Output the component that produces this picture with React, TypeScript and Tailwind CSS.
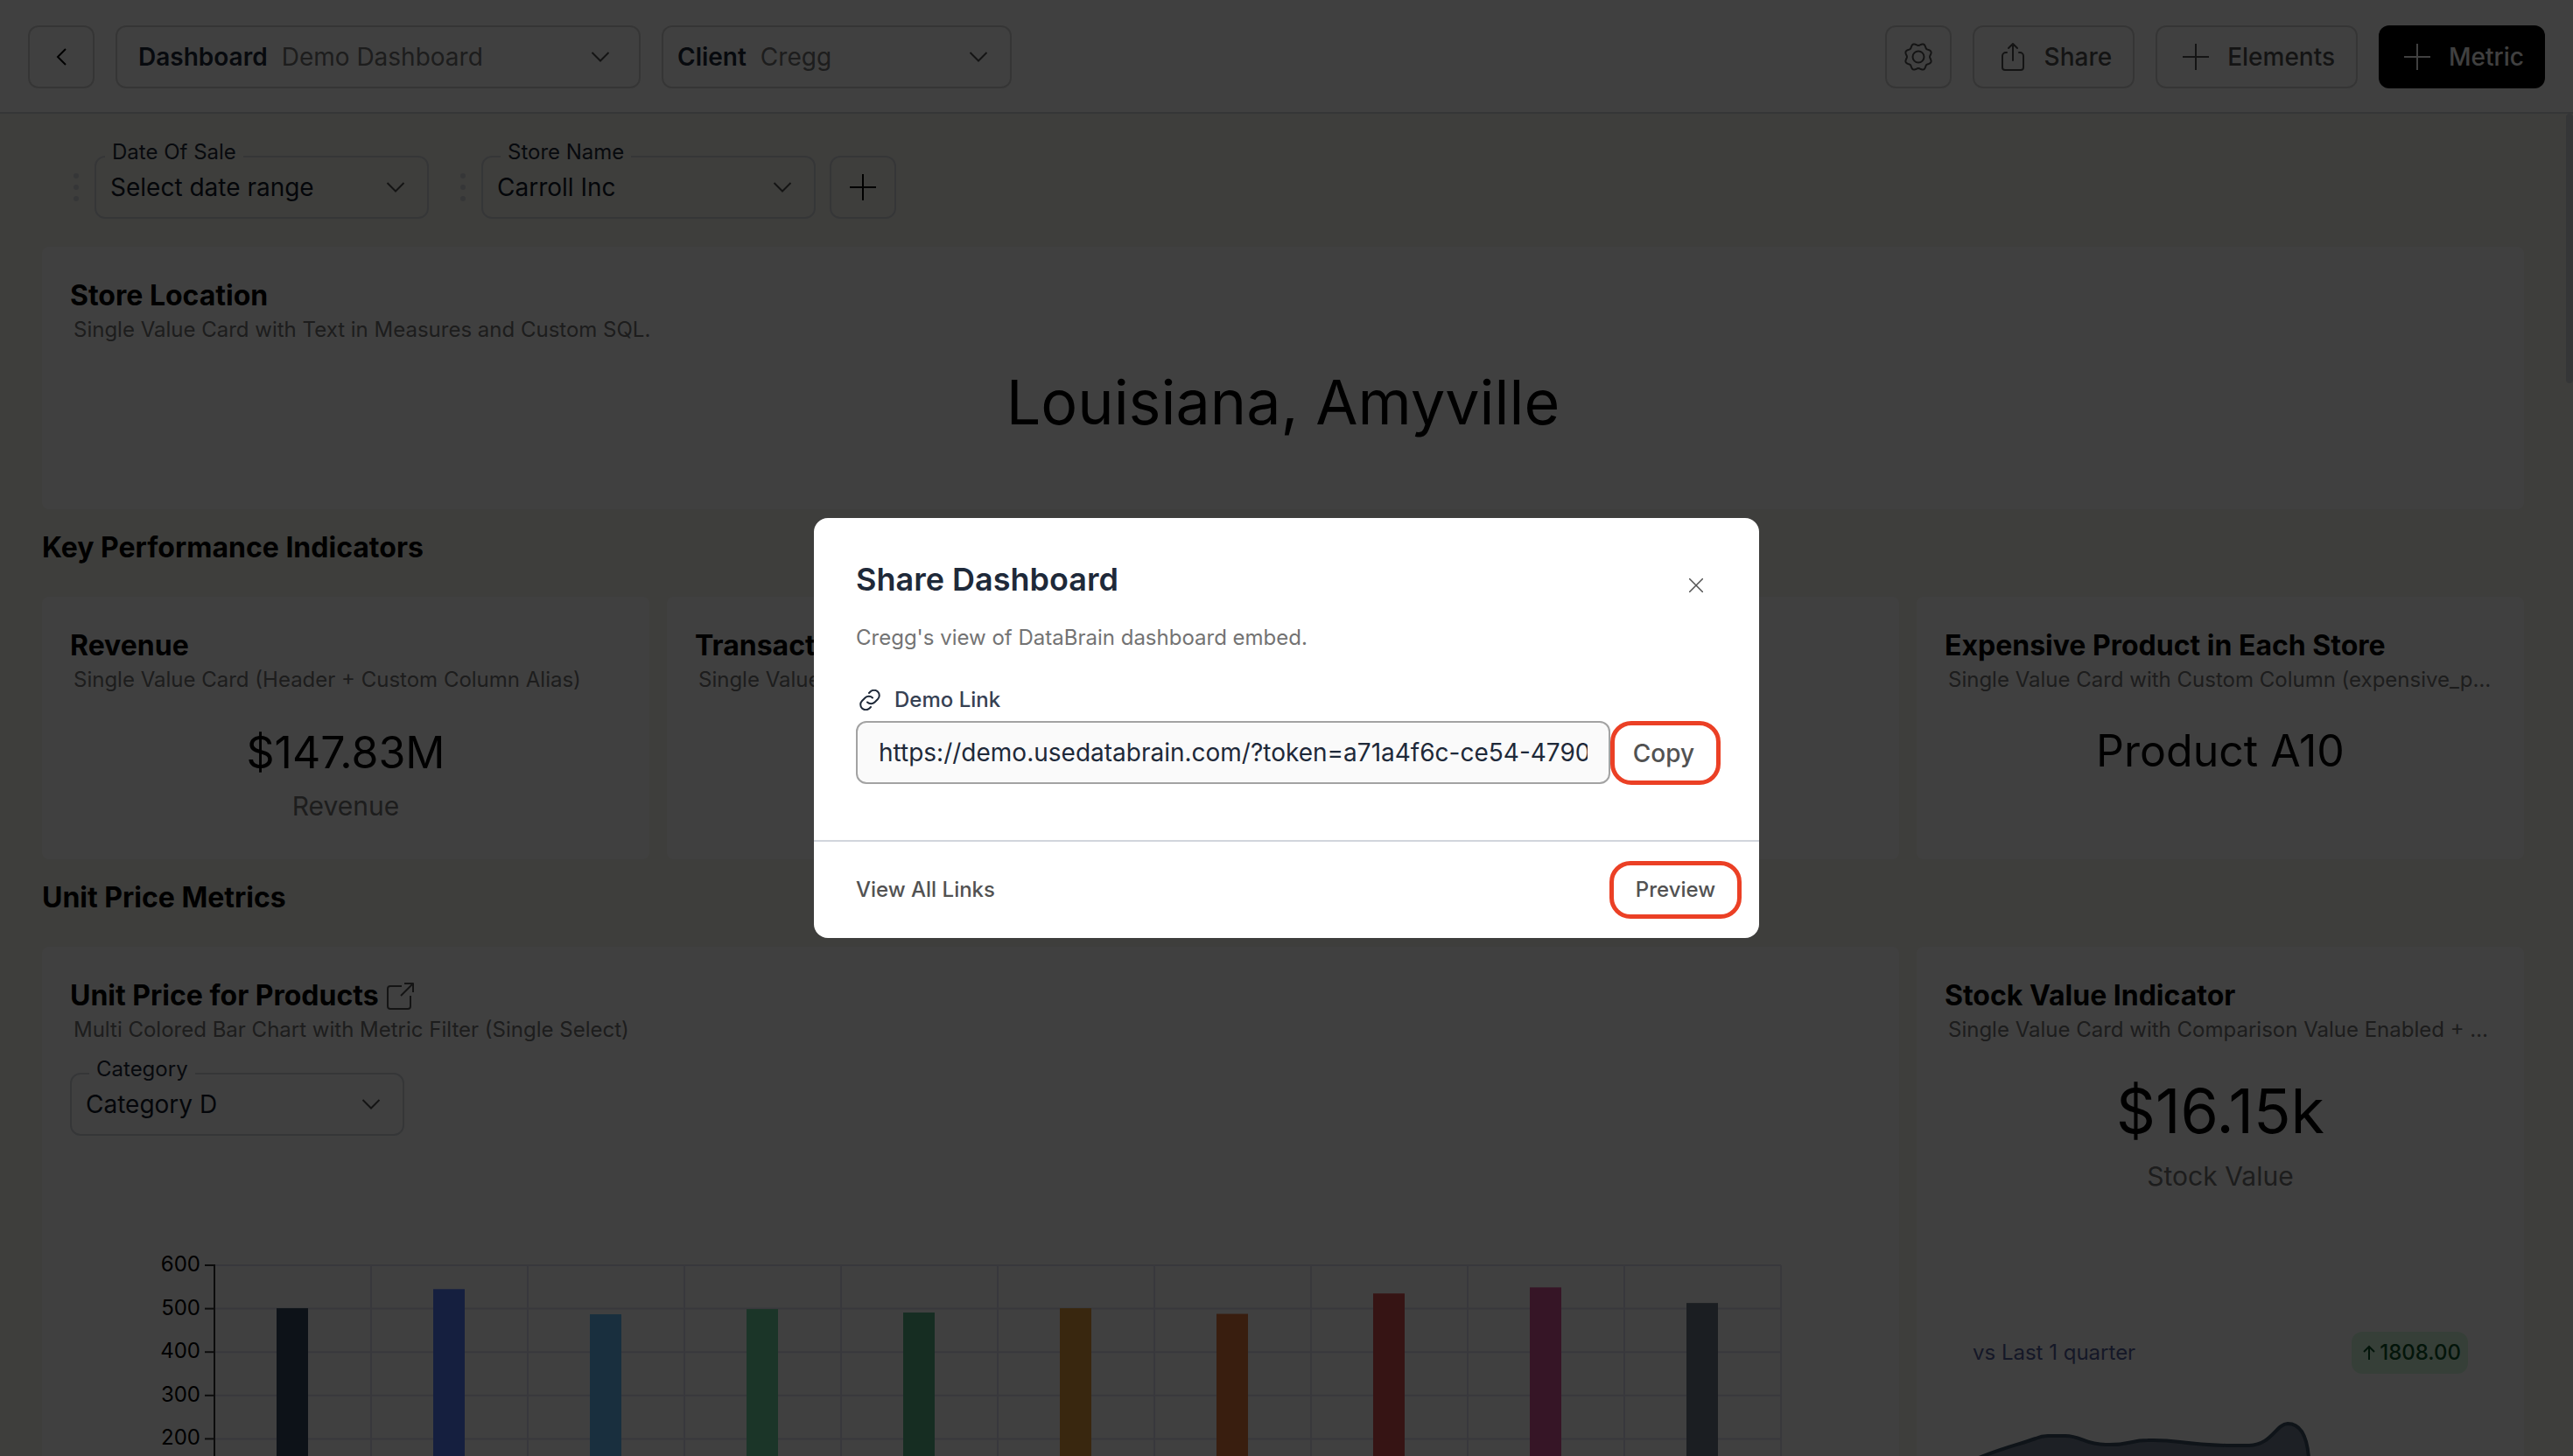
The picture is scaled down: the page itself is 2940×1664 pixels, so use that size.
import { ReactNode } from 'react';

const CHART_BARS = [
  { value: 501, color: '#344860' },
  { value: 545, color: '#547cfc' },
  { value: 487, color: '#64bcf8' },
  { value: 499, color: '#6cd4a0' },
  { value: 491, color: '#58b488' },
  { value: 501, color: '#e49c3c' },
  { value: 488, color: '#e4783c' },
  { value: 535, color: '#d85050' },
  { value: 549, color: '#d85498' },
  { value: 513, color: '#6c7888' },
];

const TICKS = [600, 500, 400, 300, 200];

const tickY = (value: number) => 20 + (600 - value) * 0.496;

// Eight rounded teeth around a 34px box
const GEAR_POINTS = Array.from({ length: 97 }, (_, i) => {
  const angle = (i / 96) * Math.PI * 2;
  const radius = 14.3 - 1.3 * Math.cos(8 * angle);
  return `${(17 + radius * Math.cos(angle)).toFixed(2)},${(17 + radius * Math.sin(angle)).toFixed(2)}`;
}).join(' ');

const ChevronDown = () => (
  <svg viewBox="0 0 24 24" className="h-6 w-6 shrink-0" fill="none" stroke="currentColor" strokeWidth="2" aria-hidden="true">
    <path d="M2.5 7 12 16.500l9.500-9.500" />
  </svg>
);

const PlusIcon = () => (
  <svg viewBox="0 0 32 32" className="h-8 w-8 shrink-0" fill="none" stroke="currentColor" strokeWidth="2" aria-hidden="true">
    <path d="M1 16h30M16 1v30" />
  </svg>
);

const GearIcon = () => (
  <svg viewBox="0 0 34 34" className="h-[34px] w-[34px]" fill="none" stroke="currentColor" strokeWidth="2" strokeLinejoin="round" aria-hidden="true">
    <circle cx="17" cy="17" r="6.500" />
    <polygon points={GEAR_POINTS} />
  </svg>
);

const ShareIcon = () => (
  <svg viewBox="0 0 32 36" className="h-9 w-8" fill="none" stroke="currentColor" strokeWidth="2" strokeLinejoin="round" strokeLinecap="round" aria-hidden="true">
    <path d="M9 13H8a4 4 0 0 0-4 4v13a3 3 0 0 0 3 3h18a3 3 0 0 0 3-3V17a4 4 0 0 0-4-4h-1M16 22V3M11 8l5-5 5 5" />
  </svg>
);

const LinkIcon = () => (
  <svg viewBox="0 0 24 24" className="mx-1 h-6 w-6 text-gray-800" fill="none" stroke="currentColor" strokeWidth="2" strokeLinecap="round" aria-hidden="true">
    <path d="M15 9.500A6 6 0 0 0 6.500 9.500L3 13a6 6 0 0 0 8.500 8.500L13 20M9 14.500A6 6 0 0 0 17.500 14.500L21 11a6 6 0 0 0-8.500-8.500L11 4" />
  </svg>
);

const ExternalIcon = () => (
  <svg viewBox="0 0 34 34" className="h-[34px] w-[34px] text-neutral-600" fill="none" stroke="currentColor" strokeWidth="2" strokeLinejoin="round" aria-hidden="true">
    <path d="M18 6H5a3 3 0 0 0-3 3v20a3 3 0 0 0 3 3h20a3 3 0 0 0 3-3V17M21 3h10v10M31 3 17 17" />
  </svg>
);

type FilterProps = {
  id: string;
  label: string;
  value: string;
  labelClassName: string;
};

const Filter = ({ id, label, value, labelClassName }: FilterProps) => (
  <div className="relative w-[382px]">
    <label htmlFor={id} className={`absolute -top-5 px-2 text-2xl text-gray-800 ${labelClassName}`}>
      {label}
    </label>
    <select id={id} className="h-[72px] w-full appearance-none rounded-xl border-2 border-gray-300 bg-transparent pr-16 pl-4 text-[28px] text-gray-900">
      <option>{value}</option>
    </select>
    <span className="pointer-events-none absolute inset-y-0 right-[26px] flex items-center text-neutral-600">
      <ChevronDown />
    </span>
  </div>
);

const Grip = () => (
  <div className="flex flex-col gap-[7px]">
    <span className="h-1.5 w-1.5 rounded-full bg-gray-300" />
    <span className="h-1.5 w-1.5 rounded-full bg-gray-300" />
    <span className="h-1.5 w-1.5 rounded-full bg-gray-300" />
  </div>
);

type HeaderSelectProps = {
  id: string;
  label: string;
  value: string;
  className: string;
};

const HeaderSelect = ({ id, label, value, className }: HeaderSelectProps) => (
  <div className={`flex h-[72px] items-center rounded-xl border-2 border-neutral-300 text-[28px] ${className}`}>
    <label htmlFor={id} className="font-semibold text-gray-800">
      {label}
    </label>
    <select id={id} className="min-w-0 flex-1 appearance-none bg-transparent pl-4 text-neutral-500">
      <option>{value}</option>
    </select>
    <ChevronDown />
  </div>
);

type CardProps = {
  title: string;
  subtitle: string;
  icon?: ReactNode;
  className?: string;
  children?: ReactNode;
};

const Card = ({ title, subtitle, icon, className = '', children }: CardProps) => (
  <section className={`flex min-w-0 flex-col rounded-lg bg-white px-8 pt-9 ${className}`}>
    <h3 className="flex items-center gap-2 text-[32px] leading-10 font-bold text-black">
      {title}
      {icon}
    </h3>
    <p className="truncate px-1 text-2xl leading-[38px] text-neutral-500">{subtitle}</p>
    {children}
  </section>
);

const BarChart = () => (
  <svg viewBox="0 0 2058 300" className="mt-32 w-full" fontFamily="Inter, sans-serif" role="img" aria-label="Unit price for products">
    {TICKS.map((tick) => (
      <g key={tick}>
        <text x="149" y={tickY(tick) + 7} fontSize="24" textAnchor="end" fill="#000">
          {tick}
        </text>
        <path d={`M154 ${tickY(tick)}h11`} stroke="#333" strokeWidth="2" />
        <path d={`M165 ${tickY(tick)}h1790`} stroke="#e0e0f0" strokeWidth="2" />
      </g>
    ))}
    {CHART_BARS.map((bar, i) => (
      <g key={bar.color}>
        <path d={`M${344 + i * 179} 20v280`} stroke="#e0e0f0" strokeWidth="2" />
        <rect x={236 + i * 179} y={tickY(bar.value)} width="36" height={300 - tickY(bar.value)} fill={bar.color} />
      </g>
    ))}
    <path d="M165 19v281" stroke="#333" strokeWidth="2" />
  </svg>
);

const TrendChart = () => (
  <svg viewBox="0 0 566 80" className="w-full" role="img" aria-label="Stock value trend">
    <path
      d="M-10 64C20 48 50 42 72 34Q79 31 86 31H106C124 31 128 41 152 41C178 42 180 36 200 36C236 35 232 40 290 42H316C342 41 346 18 360 17C374 17 382 30 384 56V80H-10Z"
      fill="#747f92"
      stroke="#3c5064"
      strokeWidth="4"
    />
  </svg>
);

const Header = () => (
  <header className="flex h-[130px] items-center justify-between gap-6 border-t-2 border-b-2 border-t-white border-b-gray-300 bg-white px-8 text-neutral-600">
    <div className="flex items-center gap-6">
      <button aria-label="Back" className="flex h-[72px] w-[76px] items-center justify-center rounded-xl border-2 border-neutral-300">
        <svg viewBox="0 0 24 24" className="h-6 w-6 text-black" fill="none" stroke="currentColor" strokeWidth="2">
          <path d="M17 3 8 12l9 9" />
        </svg>
      </button>
      <HeaderSelect id="dashboard" label="Dashboard" value="Demo Dashboard" className="w-[600px] pr-8 pl-6" />
      <HeaderSelect id="client" label="Client" value="Cregg" className="w-[400px] pr-6 pl-4" />
    </div>
    <div className="flex items-center gap-6 text-[28px] font-medium">
      <button aria-label="Settings" className="flex h-[72px] w-[76px] items-center justify-center rounded-xl border-2 border-neutral-300">
        <GearIcon />
      </button>
      <button className="flex h-[72px] items-center gap-5 rounded-xl border-2 border-neutral-300 pr-6 pl-7">
        <ShareIcon />
        Share
      </button>
      <button className="flex h-[72px] items-center gap-5 rounded-xl border-2 border-neutral-300 pr-6 pl-7">
        <PlusIcon />
        Elements
      </button>
      <button className="flex h-[72px] items-center gap-5 rounded-xl bg-black pr-6 pl-7 text-white">
        <PlusIcon />
        Metric
      </button>
    </div>
  </header>
);

const Dashboard = () => (
  <main className="px-14 pt-12 pl-12">
    <div className="flex items-center">
      <div className="w-[60px] pl-9">
        <Grip />
      </div>
      <Filter id="date" label="Date Of Sale" value="Select date range" labelClassName="left-3 bg-[#f8f7ee]" />
      <div className="w-[60px] pl-9">
        <Grip />
      </div>
      <Filter id="store" label="Store Name" value="Carroll Inc" labelClassName="left-[22px] bg-[#f8f7ee]" />
      <button aria-label="Add filter" className="ml-4 flex h-[72px] w-[76px] items-center justify-center rounded-xl border-2 border-gray-300">
        <PlusIcon />
      </button>
    </div>

    <Card title="Store Location" subtitle="Single Value Card with Text in Measures and Custom SQL." className="mt-8 h-[300px]">
      <p className="mt-5 text-center text-[70px] leading-[88px]">Louisiana, Amyville</p>
    </Card>

    <h2 className="pt-[18px] pb-[30px] text-[32px] leading-[52px] font-bold">Key Performance Indicators</h2>
    <div className="grid grid-cols-4 gap-5">
      <Card title="Revenue" subtitle="Single Value Card (Header + Custom Column Alias)" className="h-[300px]">
        <p className="mt-8 text-center text-[50px] leading-[64px]">$147.83M</p>
        <p className="text-center text-[30px] leading-[58px] text-neutral-500">Revenue</p>
      </Card>
      <Card title="Transactions" subtitle="Single Value Card" />
      <Card title="Orders" subtitle="Single Value Card" />
      <Card title="Expensive Product in Each Store" subtitle="Single Value Card with Custom Column (expensive_product)">
        <p className="mt-[30px] text-center text-[50px] leading-[64px]">Product A10</p>
      </Card>
    </div>

    <h2 className="pt-[18px] pb-[30px] text-[32px] leading-[52px] font-bold">Unit Price Metrics</h2>
    <div className="grid grid-cols-4 gap-5">
      <Card
        title="Unit Price for Products"
        subtitle="Multi Colored Bar Chart with Metric Filter (Single Select)"
        icon={<ExternalIcon />}
        className="col-span-3"
      >
        <div className="mt-[30px]">
          <Filter id="category" label="Category" value="Category D" labelClassName="left-[22px] bg-white" />
        </div>
        <BarChart />
      </Card>
      <Card title="Stock Value Indicator" subtitle="Single Value Card with Comparison Value Enabled + Trend">
        <p className="mt-8 text-center text-[70px] leading-[84px]">$16.15k</p>
        <p className="text-center text-[30px] leading-[64px] text-neutral-500">Stock Value</p>
        <div className="mt-[146px] flex items-center justify-between px-8 text-2xl text-[#56609c]">
          vs Last 1 quarter
          <span className="flex h-12 items-center gap-1 rounded-xl bg-[#d8fce0] pr-2 pl-3 font-medium text-green-900">
            <svg viewBox="0 0 16 18" className="h-[18px] w-4" fill="none" stroke="currentColor" strokeWidth="2" aria-hidden="true">
              <path d="M8 17V2M2 8l6-6 6 6" />
            </svg>
            1808.00
          </span>
        </div>
        <div className="mt-10 px-8">
          <TrendChart />
        </div>
      </Card>
    </div>
  </main>
);

const ShareDialog = () => (
  <div className="fixed inset-0 z-10 flex items-center justify-center bg-black/75">
    <div role="dialog" aria-modal="true" aria-labelledby="share-title" className="w-[1080px] rounded-2xl bg-white">
      <div className="px-12 pt-12">
        <div className="flex items-start justify-between">
          <h2 id="share-title" className="text-4xl leading-[44px] font-semibold text-gray-800">
            Share Dashboard
          </h2>
          <button aria-label="Close" className="mt-3 flex h-[34px] w-12 items-center justify-center text-neutral-600">
            <svg viewBox="0 0 16 16" className="h-4 w-4" fill="none" stroke="currentColor" strokeWidth="1.500">
              <path d="M0 0l16 16M16 0 0 16" />
            </svg>
          </button>
        </div>
        <p className="mt-[25px] text-2xl leading-[36px] text-neutral-500">Cregg&apos;s view of DataBrain dashboard embed.</p>
        <label htmlFor="demo-link" className="mt-[37px] flex items-center gap-3 text-2xl leading-8 font-medium text-gray-700">
          <LinkIcon />
          Demo Link
        </label>
        <div className="mt-2 flex">
          <input
            id="demo-link"
            readOnly
            value="https://demo.usedatabrain.com/?token=a71a4f6c-ce54-4790-a3c5"
            className="h-[72px] w-[862px] shrink-0 rounded-xl border-2 border-[#a3a3a3] bg-[#fafafa] px-6 text-[28px] text-gray-800"
          />
          <button className="h-[73px] w-[126px] shrink-0 rounded-3xl border-[5px] border-[#eb4025] pr-1 text-[28px] font-medium text-neutral-600">
            Copy
          </button>
        </div>
      </div>
      <div className="mt-[63px] flex items-center justify-between border-t-2 border-gray-300 py-[22px] pr-5 pl-12 text-2xl font-medium text-neutral-600">
        <button>View All Links</button>
        <button className="h-[66px] w-[151px] rounded-3xl border-[5px] border-[#eb4025]">Preview</button>
      </div>
    </div>
  </div>
);

const App = () => (
  <div className="relative h-screen overflow-hidden bg-[#f8f7ee] font-['Inter',sans-serif] text-black">
    <Header />
    <Dashboard />
    <div className="absolute top-[130px] right-0 h-[308px] w-2 rounded bg-gray-300" />
    <ShareDialog />
  </div>
);

export default App;
